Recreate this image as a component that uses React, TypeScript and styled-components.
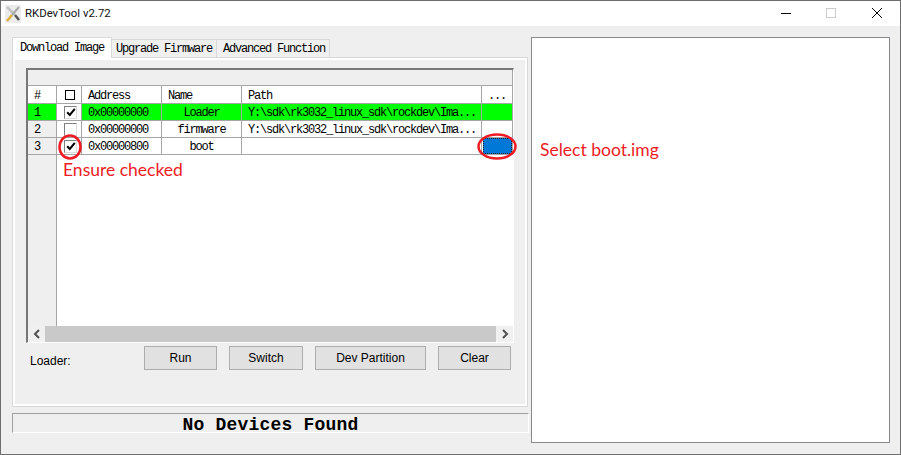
import React from "react";
import styled, { createGlobalStyle } from "styled-components";

const Global = createGlobalStyle`
  html, body { margin: 0; padding: 0; background: #fff; overflow: hidden; }
  * { box-sizing: border-box; }
`;

const MONO = `"Liberation Mono", "Courier New", monospace`;
const LINE = "#a6a6a6";

const Win = styled.div`
  width: 901px; height: 455px; display: flex; flex-direction: column;
  border: 1px solid #6e6e6e; background: #efefef; font-family: "Liberation Sans", Arial, sans-serif; color: #000;
`;
const TitleBar = styled.div`
  height: 25px; flex: none; background: #fff; display: flex; align-items: center; padding-left: 4px;
`;
const AppIcon = styled.svg`width: 16px; height: 18px; flex: none; margin-top: 1px;`;
const TitleText = styled.span`
  font-family: Roboto, "Noto Sans", sans-serif; font-size: 11.4px; margin-left: 4px; color: #111; flex: 1; position: relative; top: -1px;
`;
const WinButton = styled.svg`width: 46px; height: 25px; flex: none;`;

const Body = styled.div`flex: 1; display: flex; padding: 11px 0 0 11px; gap: 2px; min-height: 0;`;
const LeftCol = styled.div`width: 517px; flex: none; display: flex; flex-direction: column;`;
const TabRow = styled.div`height: 20px; display: flex; align-items: flex-end; position: relative; z-index: 1;`;
const Tab = styled.div<{ $active?: boolean; $w: number; $pad: number }>`
  width: ${(p) => p.$w}px; height: ${(p) => (p.$active ? 21 : 18)}px;
  margin-bottom: ${(p) => (p.$active ? -1 : 0)}px;
  background: ${(p) => (p.$active ? "#fff" : "#f0f0f0")};
  border: 1px solid #d9d9d9; border-bottom: none;
  border-left: ${(p) => (p.$active ? "1px solid #d9d9d9" : "none")};
  font-family: ${MONO}; font-size: 12px; letter-spacing: -1.2px; white-space: pre;
  padding-left: ${(p) => p.$pad}px; line-height: ${(p) => (p.$active ? 20 : 18)}px; color: #000;
`;
const Panel = styled.div`
  width: 516px; height: 350px; flex: none; border: 1px solid #d9d9d9; box-shadow: inset 0 0 0 2px #fff;
  background: #efefef; padding: 10px 0 0 13px;
`;
const GridFrame = styled.div`
  width: 488px; height: 275px; display: flex; flex-direction: column; position: relative;
  border-style: solid; border-width: 2px 1px 1px 2px; border-color: #777 #fff #fff #777; background: #fff;
`;
const TopStrip = styled.div`height: 16px; flex: none; background: #efefef; border-right: 1px solid ${LINE}; border-bottom: 1px solid ${LINE};`;
const Row = styled.div<{ $bg?: string; $h?: number }>`
  display: grid; grid-template-columns: 29px 25px 80px 80px 240px 31px; height: ${(p) => p.$h ?? 17}px; flex: none;
  background: ${(p) => p.$bg ?? "#fff"};
`;
const Cell = styled.div<{ $center?: boolean; $pad?: number; $bg?: string; $top?: number }>`
  border-right: 1px solid ${LINE}; border-bottom: 1px solid ${LINE};
  font-family: ${MONO}; font-size: 12px; letter-spacing: -1.2px; line-height: 16px; white-space: pre; overflow: hidden;
  padding-left: ${(p) => p.$pad ?? 0}px; padding-top: ${(p) => p.$top ?? 1}px;
  background: ${(p) => p.$bg ?? "transparent"}; display: flex; align-items: center;
  justify-content: ${(p) => (p.$center ? "center" : "flex-start")}; position: relative;
`;
const Box = styled.div<{ $plain?: boolean }>`
  width: 13px; height: 13px; margin: -1px 0 0 7px; background: #fff; display: flex; align-items: center; justify-content: center;
  border-style: solid; border-width: 1px; border-color: ${(p) => (p.$plain ? "#000" : "#808080 #dcdcdc #dcdcdc #808080")};
`;
const HeadBox = styled(Box)`width: 10px; height: 10px; margin-left: 8px; background: transparent;`;
const Check = styled.svg`width: 10px; height: 10px;`;
const BlueBtn = styled.div`
  position: absolute; inset: 0 0 0 1px; background: #0078d7; outline: 1px dotted #222; outline-offset: -1px;
`;
const Empty = styled.div`flex: 1; display: flex; min-height: 0;`;
const Gutter = styled.div`width: 29px; flex: none; background: #efefef; border-right: 1px solid ${LINE};`;
const Note = styled.div`
  font-family: Lato, "Open Sans", sans-serif; color: #ed1c24; font-size: 17.5px; line-height: 22px;
`;
const EnsureNote = styled(Note)`margin: 4px 0 0 6px;`;
const SelectNote = styled(Note)`margin: 101px 0 0 8px;`;
const Scrollbar = styled.div`height: 16px; flex: none; display: flex; background: #f0f0f0;`;
const ScrollArrow = styled.div`width: 17px; flex: none; display: flex; align-items: center; justify-content: center;`;
const ScrollThumb = styled.div`flex: 1; background: #c9c9c9;`;
const Ring = styled.svg<{ $l: number; $t: number }>`
  position: absolute; left: ${(p) => p.$l}px; top: ${(p) => p.$t}px; overflow: visible; pointer-events: none;
`;
const Buttons = styled.div`display: flex; margin-top: 3px; height: 24px; gap: 12px;`;
const LoaderLabel = styled.div`
  width: 100px; margin-left: 4px; font-size: 12px; line-height: 30px; color: #000; margin-right: 2px; white-space: nowrap;
`;
const Btn = styled.div<{ $w: number }>`
  width: ${(p) => p.$w}px; height: 24px; background: #e1e1e1; border: 1px solid #adadad;
  font-size: 12px; display: flex; align-items: center; justify-content: center; padding-bottom: 1px; color: #000;
`;
const Status = styled.div`
  margin-top: 6px; height: 20px; flex: none; background: #efefef;
  border-style: solid; border-width: 1px; border-color: #a0a0a0 #fff #fff #a0a0a0;
  font-family: ${MONO}; font-weight: 700; font-size: 18px; letter-spacing: 0.2px; text-align: center; line-height: 23px; color: #000;
`;
const RightPanel = styled.div`
  width: 359px; height: 406px; flex: none; background: #fff; border: 1px solid #87878f;
`;

const Tick = () => (
  <Check viewBox="0 0 10 10">
    <path d="M1.2 5.2 L3.8 8 L8.8 1.8" fill="none" stroke="#000" strokeWidth="2" />
  </Check>
);

const rows = [
  { n: "1", checked: true, addr: "0x00000000", name: "Loader", path: "Y:\\sdk\\rk3032_linux_sdk\\rockdev\\Ima...", bg: "#00ff00" },
  { n: "2", checked: false, addr: "0x00000000", name: "firmware", path: "Y:\\sdk\\rk3032_linux_sdk\\rockdev\\Ima..." },
  { n: "3", checked: true, addr: "0x00000800", name: "boot", path: "", blue: true },
];

export default function App() {
  return (
    <>
      <Global />
      <Win>
        <TitleBar>
          <AppIcon viewBox="0 0 16 18">
            <rect width="16" height="18" fill="#ececec" />
            <path d="M2 2 L10 10" stroke="#c4c4c4" strokeWidth="2.5" />
            <path d="M10 10 L14 15" stroke="#555" strokeWidth="2.5" />
            <path d="M14 2 L7 10" stroke="#a8a8a8" strokeWidth="2" />
            <path d="M7 10 L2 16" stroke="#d9b23c" strokeWidth="2.5" />
          </AppIcon>
          <TitleText>RKDevTool v2.72</TitleText>
          <WinButton viewBox="0 0 46 25">
            <path d="M19 12.5 H29" stroke="#000" strokeWidth="1" />
          </WinButton>
          <WinButton viewBox="0 0 46 25">
            <rect x="18.5" y="7.5" width="9" height="9" fill="none" stroke="#ccc" />
          </WinButton>
          <WinButton viewBox="0 0 46 25">
            <path d="M18 7 L28 17 M28 7 L18 17" stroke="#000" strokeWidth="1" />
          </WinButton>
        </TitleBar>
        <Body>
          <LeftCol>
            <TabRow>
              <Tab $active $w={100} $pad={7}>Download Image</Tab>
              <Tab $w={105} $pad={4}>Upgrade Firmware</Tab>
              <Tab $w={113} $pad={6}>Advanced Function</Tab>
            </TabRow>
            <Panel>
              <GridFrame>
                <TopStrip />
                <Row $h={18}>
                  <Cell $pad={6} $top={2}>#</Cell>
                  <Cell><HeadBox $plain /></Cell>
                  <Cell $pad={6} $top={2}>Address</Cell>
                  <Cell $pad={6} $top={2}>Name</Cell>
                  <Cell $pad={6} $top={2}>Path</Cell>
                  <Cell $center $top={2}>...</Cell>
                </Row>
                {rows.map((r) => (
                  <Row key={r.n} $bg={r.bg}>
                    <Cell $pad={6} $bg={r.bg ?? "#efefef"}>{r.n}</Cell>
                    <Cell $bg="#fff"><Box>{r.checked && <Tick />}</Box></Cell>
                    <Cell $pad={6}>{r.addr}</Cell>
                    <Cell $center>{r.name}</Cell>
                    <Cell $pad={6}>{r.path}</Cell>
                    <Cell>{r.blue && <BlueBtn />}</Cell>
                  </Row>
                ))}
                <Empty>
                  <Gutter />
                  <EnsureNote>Ensure checked</EnsureNote>
                </Empty>
                <Scrollbar>
                  <ScrollArrow>
                    <svg width="8" height="10" viewBox="0 0 8 10"><path d="M6 1 L2 5 L6 9" fill="none" stroke="#505050" strokeWidth="2" /></svg>
                  </ScrollArrow>
                  <ScrollThumb />
                  <ScrollArrow>
                    <svg width="8" height="10" viewBox="0 0 8 10"><path d="M2 1 L6 5 L2 9" fill="none" stroke="#505050" strokeWidth="2" /></svg>
                  </ScrollArrow>
                </Scrollbar>
                <Ring $l={30} $t={64} width="24" height="26" viewBox="0 0 24 26">
                  <ellipse cx="12" cy="13" rx="10.5" ry="11.5" fill="none" stroke="#ed1c24" strokeWidth="2.5" />
                </Ring>
                <Ring $l={449} $t={63} width="40" height="27" viewBox="0 0 40 27">
                  <ellipse cx="20" cy="13.5" rx="18.5" ry="12" fill="none" stroke="#ed1c24" strokeWidth="2.5" />
                </Ring>
              </GridFrame>
              <Buttons>
                <LoaderLabel>Loader:</LoaderLabel>
                <Btn $w={73}>Run</Btn>
                <Btn $w={74}>Switch</Btn>
                <Btn $w={111}>Dev Partition</Btn>
                <Btn $w={73}>Clear</Btn>
              </Buttons>
            </Panel>
            <Status>No Devices Found</Status>
          </LeftCol>
          <RightPanel>
            <SelectNote>Select boot.img</SelectNote>
          </RightPanel>
        </Body>
      </Win>
    </>
  );
}
